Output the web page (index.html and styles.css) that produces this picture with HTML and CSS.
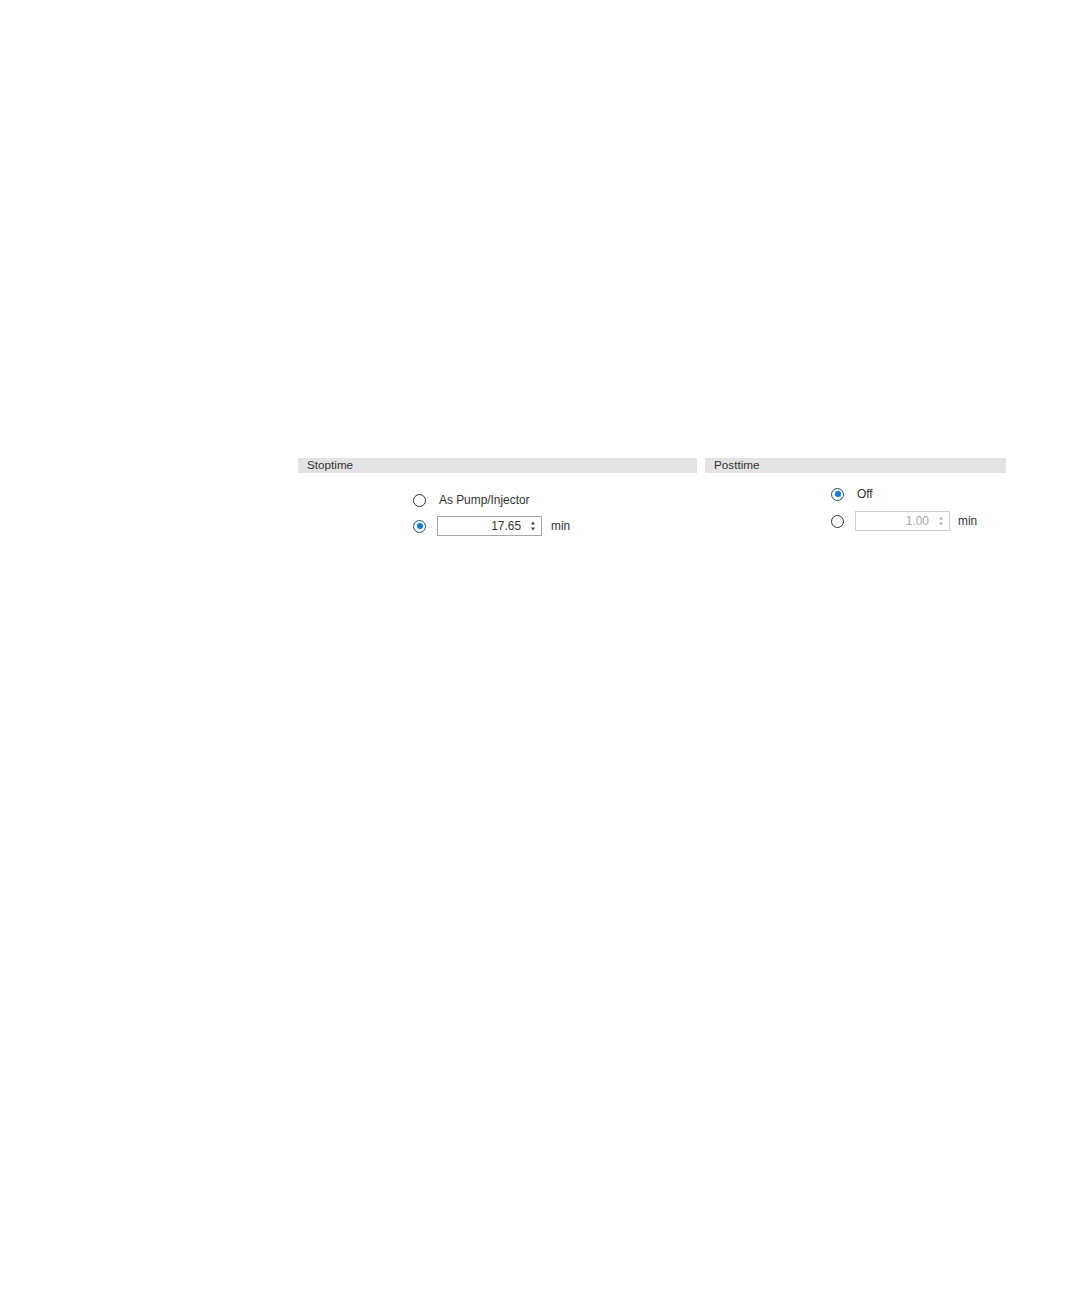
FILE: index.html
```html
<!DOCTYPE html>
<html>
<head>
<meta charset="utf-8">
<link rel="stylesheet" href="styles.css">
</head>
<body>
<div class="page">
  <section class="group group-stop">
    <div class="group-header">Stoptime</div>
    <div class="group-body body-stop">
      <div class="row">
        <span class="radio"></span>
        <span class="label">As Pump/Injector</span>
      </div>
      <div class="row">
        <span class="radio checked"></span>
        <div class="spin spin-stop">
          <span class="spin-value">17.65</span>
          <svg class="spin-arrows" width="8" height="14" viewBox="0 0 8 14"><path d="M4 2.5 L6 5.5 L2 5.5 Z M4 11.5 L6 8.5 L2 8.5 Z" fill="#444"/></svg>
        </div>
        <span class="unit">min</span>
      </div>
    </div>
  </section>
  <section class="group group-post">
    <div class="group-header">Posttime</div>
    <div class="group-body body-post">
      <div class="row">
        <span class="radio checked"></span>
        <span class="label">Off</span>
      </div>
      <div class="row">
        <span class="radio"></span>
        <div class="spin spin-post disabled">
          <span class="spin-value">1.00</span>
          <svg class="spin-arrows" width="8" height="14" viewBox="0 0 8 14"><path d="M4 2.5 L6 5.5 L2 5.5 Z M4 11.5 L6 8.5 L2 8.5 Z" fill="#b0b0b0"/></svg>
        </div>
        <span class="unit">min</span>
      </div>
    </div>
  </section>
</div>
</body>
</html>
```
FILE: styles.css
```css
html, body {
  margin: 0;
  padding: 0;
  background: #ffffff;
}
body {
  width: 1080px;
  height: 1296px;
  font-family: "Liberation Sans", Arial, sans-serif;
  color: #333333;
}
.page {
  display: flex;
  gap: 8px;
  padding-top: 458px;
  padding-left: 298px;
}
.group-stop { width: 399px; }
.group-post { width: 301px; }
.group-header {
  height: 15px;
  line-height: 14px;
  background: #e3e3e3;
  font-size: 11.7px;
  padding-left: 9px;
  color: #333;
}
.group-body {
  display: flex;
  flex-direction: column;
}
.body-stop {
  padding-top: 17px;
  padding-left: 115px;
  gap: 6px;
}
.body-post {
  padding-top: 11px;
  padding-left: 126px;
  gap: 7px;
}
.row {
  display: flex;
  align-items: center;
  height: 20px;
}
.radio {
  box-sizing: border-box;
  width: 13px;
  height: 13px;
  border: 1px solid #333;
  border-radius: 50%;
  background: #fff;
  margin-right: 11px;
  flex: none;
  position: relative;
}
.radio.checked {
  border-color: #1f4f7f;
}
.radio.checked::after {
  content: "";
  position: absolute;
  left: 2.5px;
  top: 2.5px;
  width: 6px;
  height: 6px;
  border-radius: 50%;
  background: #0a7ad9;
}
.label {
  font-size: 11.9px;
  padding-left: 2px;
  color: #333;
}
.spin {
  box-sizing: border-box;
  height: 20px;
  border: 1px solid #a8a8a8;
  display: flex;
  align-items: center;
  justify-content: flex-end;
  background: #fff;
}
.spin-stop { width: 105px; }
.spin-post { width: 95px; border-color: #cfcfcf; }
.spin-value {
  font-size: 11.9px;
  color: #333;
  margin-right: 8px;
}
.disabled .spin-value { color: #a8a8a8; }
.spin-arrows {
  margin-right: 4px;
}
.unit {
  font-size: 11.9px;
  margin-left: 9px;
  color: #333;
}
.group-post .unit { margin-left: 8px; }
```
